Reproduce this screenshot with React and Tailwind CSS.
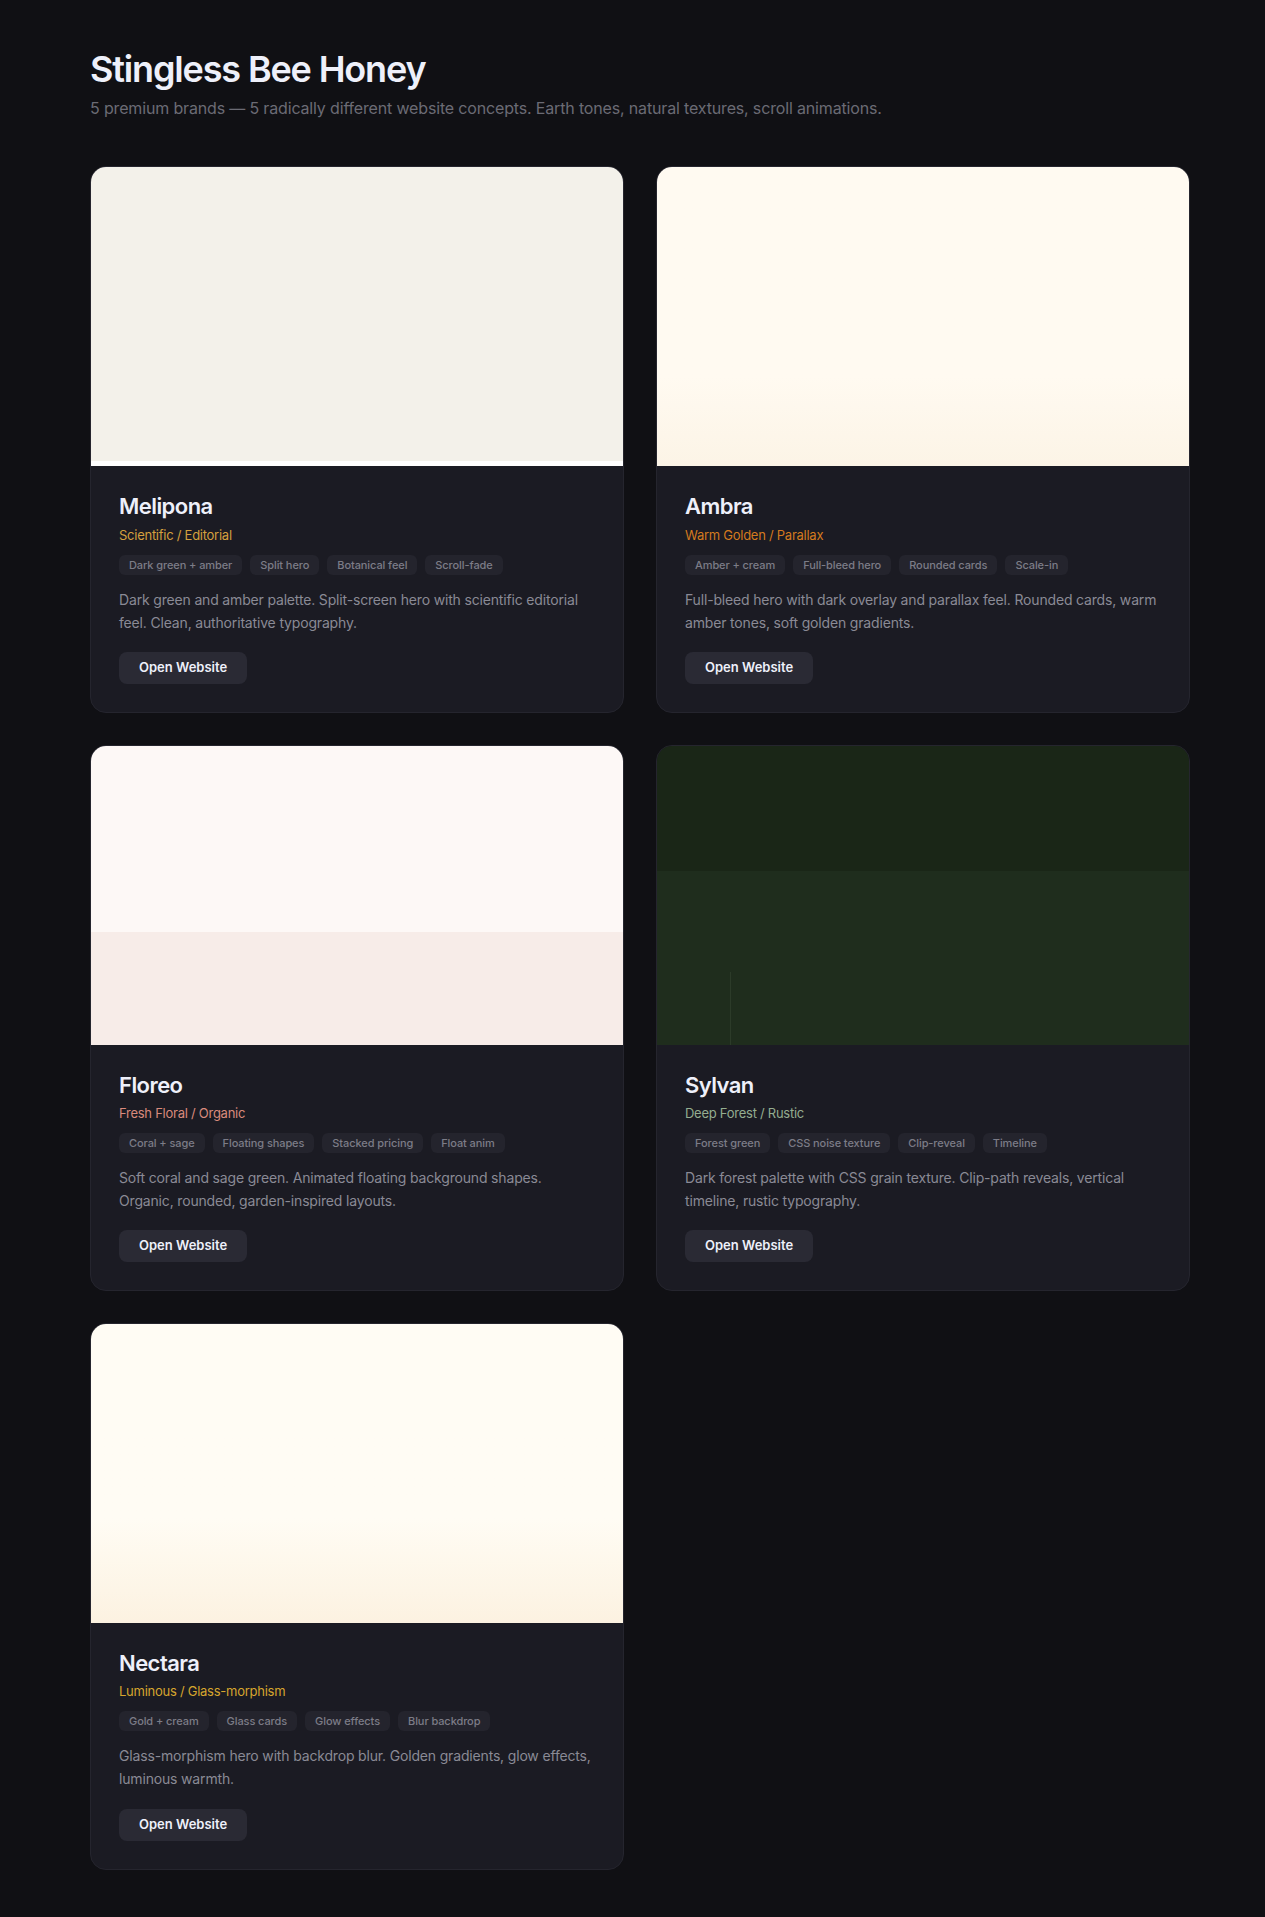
import React from 'react'

// brand concepts shown on the index page
const brands = [
  {
    name: 'Melipona',
    style: 'Scientific / Editorial',
    styleColor: 'text-[#d4a03e]',
    tags: ['Dark green + amber', 'Split hero', 'Botanical feel', 'Scroll-fade'],
    desc: 'Dark green and amber palette. Split-screen hero with scientific editorial feel. Clean, authoritative typography.',
    preview: 'melipona',
  },
  {
    name: 'Ambra',
    style: 'Warm Golden / Parallax',
    styleColor: 'text-[#d47a1e]',
    tags: ['Amber + cream', 'Full-bleed hero', 'Rounded cards', 'Scale-in'],
    desc: 'Full-bleed hero with dark overlay and parallax feel. Rounded cards, warm amber tones, soft golden gradients.',
    preview: 'ambra',
  },
  {
    name: 'Floreo',
    style: 'Fresh Floral / Organic',
    styleColor: 'text-[#d98a7c]',
    tags: ['Coral + sage', 'Floating shapes', 'Stacked pricing', 'Float anim'],
    desc: 'Soft coral and sage green. Animated floating background shapes. Organic, rounded, garden-inspired layouts.',
    preview: 'floreo',
  },
  {
    name: 'Sylvan',
    style: 'Deep Forest / Rustic',
    styleColor: 'text-[#94ad90]',
    tags: ['Forest green', 'CSS noise texture', 'Clip-reveal', 'Timeline'],
    desc: 'Dark forest palette with CSS grain texture. Clip-path reveals, vertical timeline, rustic typography.',
    preview: 'sylvan',
  },
  {
    name: 'Nectara',
    style: 'Luminous / Glass-morphism',
    styleColor: 'text-[#d6a52e]',
    tags: ['Gold + cream', 'Glass cards', 'Glow effects', 'Blur backdrop'],
    desc: 'Glass-morphism hero with backdrop blur. Golden gradients, glow effects, luminous warmth.',
    preview: 'nectara',
  },
]

const Preview = ({ kind }) => {
  if (kind === 'melipona') {
    return (
      <div className="h-[299px] flex flex-col">
        <div className="flex-1 bg-[#f3f1ea]" />
        <div className="h-[5px] bg-white" />
      </div>
    )
  }
  if (kind === 'ambra') {
    return <div className="h-[299px] bg-linear-to-b from-[#fffaf1] from-[70%] to-[#fcf4e6]" />
  }
  if (kind === 'floreo') {
    return (
      <div className="h-[299px] flex flex-col">
        <div className="h-[186px] bg-[#fdf8f6]" />
        <div className="flex-1 bg-[#f7ece8]" />
      </div>
    )
  }
  if (kind === 'sylvan') {
    return (
      <div className="h-[299px] flex flex-col">
        <div className="h-[125px] bg-[#1a2617]" />
        <div className="flex-1 bg-[#1f2d1d] flex items-end pl-[73px]">
          <div className="w-px h-[73px] bg-[#2c3b29]" />
        </div>
      </div>
    )
  }
  return <div className="h-[299px] bg-linear-to-b from-[#fffcf4] from-[65%] to-[#fcf2e1]" />
}

const BrandCard = ({ brand }) => {
  return (
    <div className="rounded-2xl overflow-hidden border border-[#25252e] bg-[#1b1b23] flex flex-col">
      <Preview kind={brand.preview} />
      <div className="p-7">
        <h2 className="text-[22px] leading-[1.1] font-semibold tracking-[-0.025em] text-[#eef0fa]">{brand.name}</h2>
        <div className={`mt-[7px] text-[13px] leading-[18px] tracking-[-0.02em] ${brand.styleColor}`}>{brand.style}</div>
        <div className="mt-[11px] flex flex-wrap gap-2">
          {brand.tags.map(t => (
            <span key={t} className="h-5 px-2.5 rounded-md bg-[#24242d] text-[#7c7c87] text-[11px] font-medium leading-5 tracking-[-0.008em]">
              {t}
            </span>
          ))}
        </div>
        <p className="mt-[13px] text-sm leading-[1.65] tracking-[-0.012em] text-[#8a8a95]">{brand.desc}</p>
        <button className="mt-[18px] h-8 px-5 rounded-lg bg-[#2a2a34] text-[#eef0fa] text-[13px] font-semibold">
          Open Website
        </button>
      </div>
    </div>
  )
}

export default function App() {
  return (
    <div className="min-h-[1917px] bg-[#101014] font-['Inter',sans-serif] pl-[90px] pt-[49px] pb-12">
      <h1 className="text-4xl leading-[1.15] font-semibold tracking-[-0.032em] text-[#eef0fa]">Stingless Bee Honey</h1>
      <p className="mt-1.5 text-base leading-6 tracking-[-0.01em] text-[#6b6b74]">
        5 premium brands — 5 radically different website concepts. Earth tones, natural textures, scroll animations.
      </p>
      <div className="mt-[46px] w-[1100px] grid grid-cols-2 gap-8">
        {brands.map(b => (
          <BrandCard key={b.name} brand={b} />
        ))}
      </div>
    </div>
  )
}
